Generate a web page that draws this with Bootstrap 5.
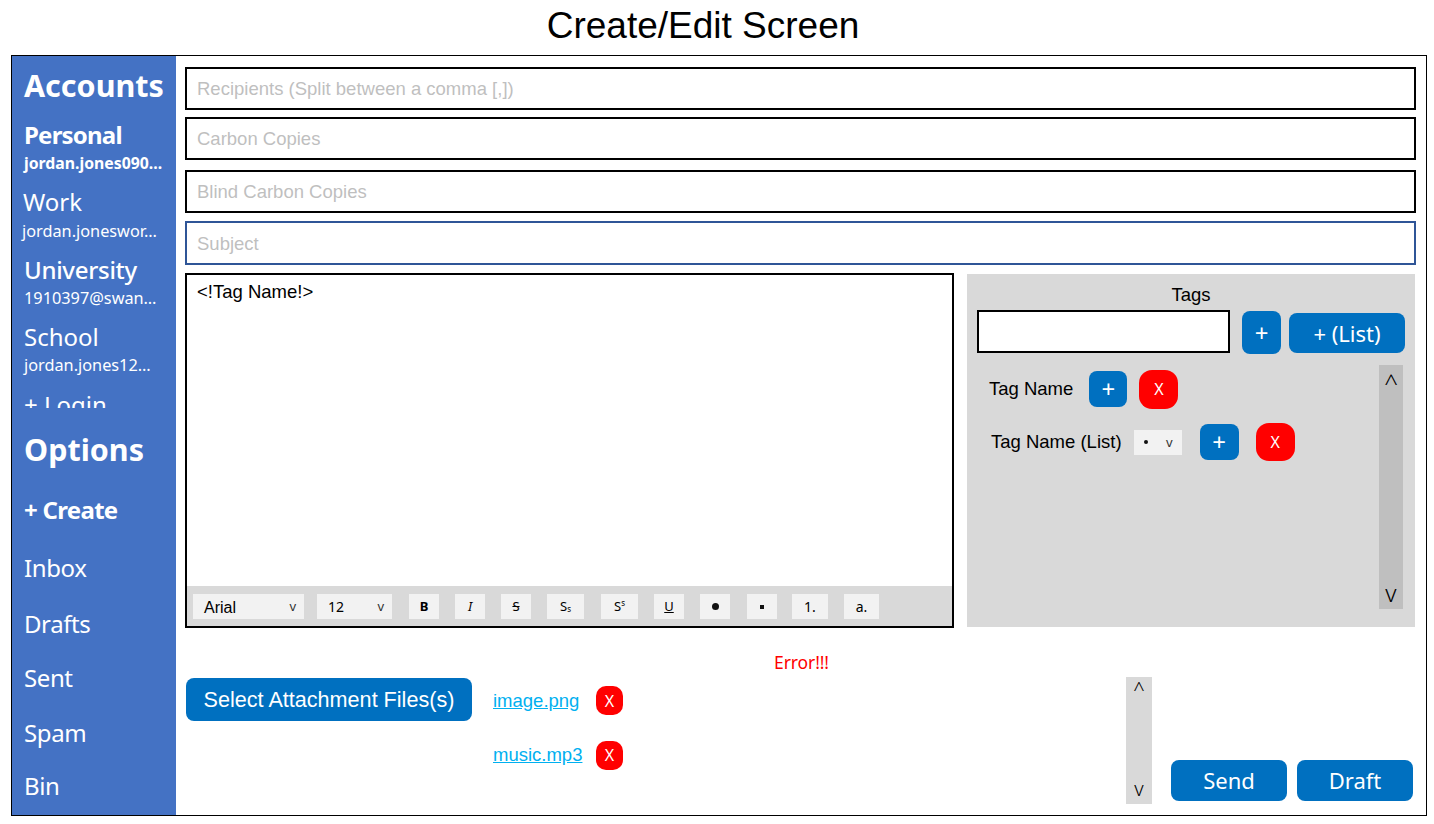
<!DOCTYPE html>
<html lang="en">
<head>
<meta charset="utf-8">
<title>Create/Edit Screen</title>
<link href="https://cdn.jsdelivr.net/npm/bootstrap@5.3.0/dist/css/bootstrap.min.css" rel="stylesheet">
<style>
html,body{height:824px;overflow:hidden;background:#fff}
body{font-family:"Liberation Sans",Arial,sans-serif;color:#000}
.screen-title{font-size:37px;line-height:50px;height:50px;margin:0;text-align:center;width:1406px;font-weight:400;padding-top:1px}
.frame{margin:5px 0 0 11px;width:1416px;height:761px;border:1px solid #000;display:flex}
.side{width:164px;flex:none;background:#4472C4;color:#fff;font-family:"Noto Sans",sans-serif;padding-left:12px;height:759px;overflow:hidden}
.side div{white-space:nowrap}
.acct-clip{height:352px;overflow:hidden;margin-left:-6px;padding-left:6px}
.h-side{font-size:30.5px;font-weight:700;line-height:40px}
.a-name{font-size:24px;line-height:32px}
.a-mail{font-size:16.3px;line-height:24px}
.a-mail.fw-bold{font-size:15.8px}
.a-name.fw-bold{letter-spacing:-.8px}
.fw-s{font-weight:500;letter-spacing:-.3px}
.nudge{margin-left:-1px}
.nudge2{margin-left:-2px;margin-top:1px}
.opt{font-size:24px;line-height:32px;letter-spacing:-.4px}
.opt.fw-bold{letter-spacing:-.7px}
.main{flex:1;padding:11px 0 0 9px;min-width:0;display:flex;flex-direction:column}
.fld.form-control{width:1231px;height:43px;border:2px solid #000;border-radius:0;padding:0 10px;font-size:18.5px;color:#000;box-shadow:none}
.fld.form-control::placeholder{color:#BFBFBF;opacity:1}
.fld.subj{border-color:#2F5597;height:44px;padding-top:1px}
.mid{margin-top:8px;display:flex;height:355px}
.editor{width:769px;height:355px;border:2px solid #000;display:flex;flex-direction:column}
.ed-body{flex:1;padding:6px 10px 0;font-size:18.5px;line-height:22px}
.tb{height:40px;background:#D9D9D9;display:flex;align-items:flex-start;padding:8px 0 0 6px;font-family:"Noto Sans",sans-serif}
.tb-i{height:25px;background:#F2F2F2;display:flex;align-items:center;justify-content:center;font-size:13px;flex:none;line-height:1}
.tb-sel{justify-content:space-between;padding:0 8px 0 11px;font-size:14px}
.ff-arial{font-family:"Liberation Sans",sans-serif}
.chev{font-size:13px;font-family:"Noto Sans",sans-serif;color:#333}
.tags{margin:1px 0 0 13px;width:448px;height:353px;background:#D9D9D9;padding:10px 10px 0}
.tg-h{font-size:18.5px;line-height:22px;text-align:center}
.tg-top{display:flex;align-items:flex-start;margin-top:4px}
.tg-in{width:253px;height:43px;background:#fff;border:2px solid #000;flex:none}
.pbtn.btn{background:#0070C0;border:0;color:#fff;border-radius:8px;padding:0;font-family:"Noto Sans",sans-serif;display:flex;align-items:center;justify-content:center;flex:none;line-height:1}
.xbtn.btn{background:#F00;border:0;color:#fff;padding:0;font-family:"Noto Sans",sans-serif;display:flex;align-items:center;justify-content:center;flex:none;line-height:1;border-radius:13px;font-size:16px}
.tg-list{display:flex;margin-top:11px}
.tg-rows{flex:1;min-width:0}
.tg-row{display:flex;align-items:center}
.tg-lbl{font-size:18.5px;white-space:nowrap}
.vbar{display:flex;flex-direction:column;justify-content:space-between;align-items:center;font-family:"Noto Sans",sans-serif;font-weight:300;line-height:1;flex:none}
.tg-bar{width:24px;height:244px;background:#BFBFBF;margin-right:2px;padding:6px 0 4px;font-size:24px}
.bottom{flex:1}
.err{color:#F00;font-family:"Noto Sans",sans-serif;font-size:17.5px;letter-spacing:-.1px;line-height:20px;text-align:center;width:1233px;padding-top:24px;height:49px}
.bot-row{display:flex;align-items:flex-start;height:127px}
.att.btn{width:286px;height:43px;margin:1px 0 0 1px;background:#0070C0;border:0;border-radius:8px;color:#fff;font-size:21.6px;padding:1px 0 0;line-height:1;flex:none}
.files{margin-left:21px;width:130px;flex:none}
.fl{display:flex;align-items:center}
.fl a{color:#00B0F0;font-size:18.5px;white-space:nowrap}
.a-bar{margin-left:503px;width:26px;height:127px;background:#D9D9D9;padding:3px 0 5px;font-size:20px}
.act{display:flex;gap:10px;margin:83px 0 0 19px}
.act .btn.pbtn{width:116px;height:41px;font-size:22px;padding-bottom:2px}
.pt-acc{padding-top:9px}
.mt-a{margin-top:14px}
.mt-b{margin-top:11px}
.mt-u{margin-top:11px}
.mt-c{margin-top:12px}
.mt-o{margin-top:21px}
.mt-1c{margin-top:25px}
.mt-2c{margin-top:26px}
.mt-3c{margin-top:24px}
.mt-4c{margin-top:22px}
.mt-4d{margin-top:23px}
.mt-4e{margin-top:21px}
.mt-f1{margin-top:7px}
.mt-f2{margin-top:10px}
.mt-f3{margin-top:8px}
.w111{width:111px}.w75{width:75px}.w30{width:30px}.w37{width:37px}.w36{width:36px}.w35{width:35px}
.ms13{margin-left:13px}.ms15{margin-left:15px}.ms16{margin-left:16px}.ms17{margin-left:17px}
.f16{font-size:16px;padding-top:2px}.f14{font-size:14px}
.tiny{font-size:8px}
.dot{width:7px;height:7px;border-radius:50%;background:#111;display:block}
.sq{width:4px;height:4px;background:#111;display:block}
.b-p1.btn,.b-p3.btn,.b-p4.btn{font-size:24px}
.b-p2.btn{width:116px;height:40px;margin:3px 0 0 8px;font-size:22px}
.b-p1.btn{width:39px;height:43px;margin:1px 0 0 12px}
.r1{height:40px;margin:4px 0 0 12px}
.b-p3.btn{width:38px;height:36px;margin-left:16px}
.b-x1.btn{width:39px;height:39px;margin-left:12px}
.r2{height:38px;margin:14px 0 0 14px}
.mini{width:48px;height:25px;margin-left:12px;justify-content:space-between;padding:0 9px 0 10px}
.mini-dot{width:4px;height:4px;background:#111;border-radius:50%;display:block}
.b-p4.btn{width:39px;height:36px;margin-left:18px}
.b-x2.btn{width:39px;height:38px;margin-left:17px}
.xbtn.fx.btn{width:27px;height:29px;margin-left:auto;border-radius:10px}
.f-a{height:29px;margin-top:9px}
.f-b{height:28px;margin-top:26px}
</style>
</head>
<body>
<h1 class="screen-title">Create/Edit Screen</h1>
<div class="frame">
  <nav class="side">
    <div class="acct-clip">
      <div class="h-side pt-acc">Accounts</div>
      <div class="a-name fw-bold mt-a">Personal</div>
      <div class="a-mail fw-bold">jordan.jones090…</div>
      <div class="a-name mt-b nudge">Work</div>
      <div class="a-mail nudge2">jordan.joneswor…</div>
      <div class="a-name fw-s mt-u">University</div>
      <div class="a-mail">1910397@swan…</div>
      <div class="a-name mt-b">School</div>
      <div class="a-mail">jordan.jones12…</div>
      <div class="a-name mt-c">+ Login</div>
    </div>
    <div class="h-side mt-o">Options</div>
    <div class="opt fw-bold mt-1c">+ Create</div>
    <div class="opt mt-2c">Inbox</div>
    <div class="opt mt-3c">Drafts</div>
    <div class="opt mt-4c">Sent</div>
    <div class="opt mt-4d">Spam</div>
    <div class="opt mt-4e">Bin</div>
  </nav>
  <main class="main">
    <input class="form-control fld" placeholder="Recipients (Split between a comma [,])">
    <input class="form-control fld mt-f1" placeholder="Carbon Copies">
    <input class="form-control fld mt-f2" placeholder="Blind Carbon Copies">
    <input class="form-control fld subj mt-f3" placeholder="Subject">
    <section class="mid">
      <div class="editor">
        <div class="ed-body">&lt;!Tag Name!&gt;</div>
        <div class="tb">
          <div class="tb-i tb-sel w111 ff-arial"><span class="f16">Arial</span><span class="chev">v</span></div>
          <div class="tb-i tb-sel w75 ms13"><span>12</span><span class="chev">v</span></div>
          <div class="tb-i w30 ms17 fw-bold">B</div>
          <div class="tb-i w30 ms16 fst-italic">I</div>
          <div class="tb-i w30 ms16"><s>S</s></div>
          <div class="tb-i w37 ms16">S<sub class="tiny">s</sub></div>
          <div class="tb-i w37 ms17">S<sup class="tiny">s</sup></div>
          <div class="tb-i w30 ms16"><u>U</u></div>
          <div class="tb-i w30 ms16"><span class="dot"></span></div>
          <div class="tb-i w30 ms17"><span class="sq"></span></div>
          <div class="tb-i w36 ms15 f14">1.</div>
          <div class="tb-i w35 ms16 f14">a.</div>
        </div>
      </div>
      <aside class="tags">
        <div class="tg-h">Tags</div>
        <div class="tg-top">
          <div class="tg-in"></div>
          <button class="btn pbtn b-p1">+</button>
          <button class="btn pbtn b-p2">+ (List)</button>
        </div>
        <div class="tg-list">
          <div class="tg-rows">
            <div class="tg-row r1">
              <span class="tg-lbl">Tag Name</span>
              <button class="btn pbtn b-p3">+</button>
              <button class="btn xbtn b-x1">X</button>
            </div>
            <div class="tg-row r2">
              <span class="tg-lbl">Tag Name (List)</span>
              <div class="tb-i mini"><span class="mini-dot"></span><span class="chev">v</span></div>
              <button class="btn pbtn b-p4">+</button>
              <button class="btn xbtn b-x2">X</button>
            </div>
          </div>
          <div class="vbar tg-bar"><span>^</span><span>v</span></div>
        </div>
      </aside>
    </section>
    <section class="bottom">
      <div class="err">Error!!!</div>
      <div class="bot-row">
        <button class="btn att">Select Attachment Files(s)</button>
        <div class="files">
          <div class="fl f-a"><a href="#">image.png</a><button class="btn xbtn fx">X</button></div>
          <div class="fl f-b"><a href="#">music.mp3</a><button class="btn xbtn fx">X</button></div>
        </div>
        <div class="vbar a-bar"><span>^</span><span>v</span></div>
        <div class="act">
          <button class="btn pbtn">Send</button>
          <button class="btn pbtn">Draft</button>
        </div>
      </div>
    </section>
  </main>
</div>
</body>
</html>
